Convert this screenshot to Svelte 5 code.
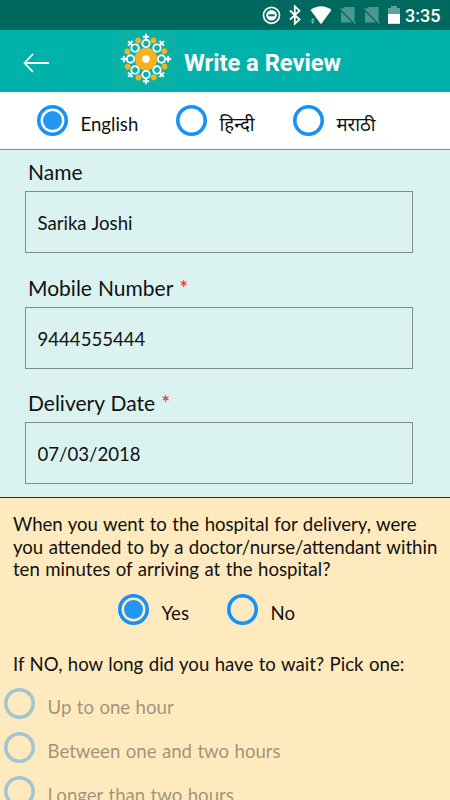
<script>
  let language = $state('en');
  let attended = $state('yes');

  const languages = [
    { id: 'en', label: 'English' },
    { id: 'hi', label: 'हिन्दी' },
    { id: 'mr', label: 'मराठी' }
  ];

  const fields = [
    { label: 'Name', value: 'Sarika Joshi', required: false },
    { label: 'Mobile Number', value: '9444555444', required: true },
    { label: 'Delivery Date', value: '07/03/2018', required: true }
  ];

  const waits = ['Up to one hour', 'Between one and two hours', 'Longer than two hours'];
  const petals = [0, 45, 90, 135, 180, 225, 270, 315];
</script>

{#snippet radio(checked)}
  <span class="radio">
    {#if checked}<span class="dot"></span>{/if}
  </span>
{/snippet}

<div class="screen">
  <div class="status">
    <svg width="140" height="30" viewBox="260 0 140 30">
      <circle cx="271.5" cy="15.3" r="8" fill="none" stroke="#fff" stroke-width="1.7" />
      <circle cx="271.5" cy="15.3" r="5.3" fill="#fff" />
      <path d="M268.3 15.3h6.4" stroke="#00695f" stroke-width="2" />
      <path d="M290 10.5l9.5 9-4.7 4.3V6.400l4.700 4.300-9.500 9" fill="none" stroke="#fff" stroke-width="1.8" />
      <path d="M310.5 10q10.500-7.500 21 0L321 24.300z" fill="#fff" />
      <path d="M311 20.500l1.700-2.300 1.700 2.300zM311 21.500h3.400l-1.700 2.300z" fill="#a5cfca" />
      <g fill="#4a9890">
        <path d="M345 7h9.500v15.500L341.500 9.500zM341 11.500l11 11h-11z" />
        <path d="M369 7h9.500v15.500L365.500 9.500zM365 11.500l11 11h-11z" />
      </g>
      <path d="M340.500 8l15 15.500M364.500 8l15 15.500" stroke="#4a9890" stroke-width="1.3" />
      <path d="M388 8h3V6h6v2h3v6h-12z" fill="#5da39c" />
      <path d="M388 14h12v9.800h-12z" fill="#fff" />
    </svg>
    <span class="time">3:35</span>
  </div>

  <header>
    <svg class="back" width="26" height="20" viewBox="0 0 26 20">
      <path d="M26 10H2M10 1L1.500 10l8.500 9" fill="none" stroke="#fff" stroke-width="1.8" />
    </svg>
    <svg class="logo" width="62" height="56" viewBox="-31 -28 62 56">
      <rect x="-31" y="-28" width="62" height="56" fill="#0bb1a6" />
      <circle r="11.3" fill="#f9b122" />
      <circle r="3.7" fill="#fff" />
      {#each petals as angle}
        <g transform="rotate({angle})">
          <circle cy="-15.5" r="5" fill="#0bb1a6" />
          <circle cy="-15.5" r="3.700" fill="none" stroke="#fff" stroke-width="1.9" />
          <path d="M0-19v-6.200M-3.200-22.200h6.400" stroke="#fff" stroke-width="1.9" />
          <circle cx="7.500" cy="-18.500" r="2.900" fill="#f9b122" />
        </g>
      {/each}
    </svg>
    <h1>Write a Review</h1>
  </header>

  <div class="languages">
    {#each languages as lang}
      <button class="choice {lang.id}" onclick={() => (language = lang.id)}>
        {@render radio(language === lang.id)}
        <span class="text">{lang.label}</span>
      </button>
    {/each}
  </div>

  <section class="details">
    {#each fields as field}
      <label class="field">
        <span class="label">{field.label}{#if field.required}<span class="star">*</span>{/if}</span>
        <input type="text" bind:value={field.value} />
      </label>
    {/each}
  </section>

  <section class="questions">
    <p class="question">
      When you went to the hospital for delivery, were<br />
      you attended to by a doctor/nurse/attendant within<br />
      ten minutes of arriving at the hospital?
    </p>
    <div class="answers">
      <button class="choice yes" onclick={() => (attended = 'yes')}>
        {@render radio(attended === 'yes')}
        <span class="text">Yes</span>
      </button>
      <button class="choice" onclick={() => (attended = 'no')}>
        {@render radio(attended === 'no')}
        <span class="text">No</span>
      </button>
    </div>
    <p class="question follow">If NO, how long did you have to wait? Pick one:</p>
    <div class="waits">
      {#each waits as wait}
        <button class="choice" disabled>
          {@render radio(false)}
          <span class="text">{wait}</span>
        </button>
      {/each}
    </div>
  </section>
</div>

<style>
  :global(body) {
    margin: 0;
    overflow: hidden;
  }

  .screen {
    width: 450px;
    height: 800px;
    overflow: hidden;
    display: flex;
    flex-direction: column;
    font-family: Lato, 'Noto Sans', sans-serif;
    color: #111;
  }

  .status {
    height: 30px;
    flex-shrink: 0;
    display: flex;
    justify-content: flex-end;
    padding-right: 10px;
    gap: 5px;
    background: #00695f;
  }

  .time {
    width: 35px;
    font: 500 18px/31px Roboto, sans-serif;
    color: #fff;
    white-space: nowrap;
  }

  header {
    height: 62px;
    flex-shrink: 0;
    display: flex;
    align-items: center;
    background: #00b2a9;
  }

  .back {
    margin: 3px 0 0 23px;
  }

  .logo {
    margin: -4px 0 0 66px;
  }

  h1 {
    margin: 4px 0 0 7px;
    font: 700 23.7px/30px Roboto, sans-serif;
    color: #fff;
    white-space: nowrap;
  }

  .choice {
    display: flex;
    align-items: flex-start;
    height: 31px;
    padding: 0;
    border: 0;
    background: none;
    font: inherit;
    font-size: 18.6px;
    word-spacing: 0.7px;
    color: inherit;
    white-space: nowrap;
  }

  .radio {
    width: 31px;
    height: 31px;
    flex-shrink: 0;
    border-radius: 50%;
    box-shadow: inset 0 0 0 3.6px #1592f5;
  }

  .dot {
    display: block;
    width: 19px;
    height: 19px;
    margin: 6px;
    border-radius: 50%;
    background: #2196f3;
  }

  .text {
    margin-left: 12.5px;
    line-height: 24px;
    padding-top: 7px;
  }

  .languages {
    height: 57px;
    flex-shrink: 0;
    box-sizing: border-box;
    display: flex;
    padding: 13px 0 0 37px;
    background: #fff;
  }

  .en {
    width: 139px;
  }

  .hi {
    width: 117px;
  }

  .details {
    height: 348px;
    flex-shrink: 0;
    box-sizing: border-box;
    padding: 7px 37px 0 25px;
    border-top: 1px solid #7e8f8d;
    background: #dbf3f0;
  }

  .field {
    display: block;
    height: 115.5px;
  }

  .label {
    display: block;
    height: 34px;
    padding-left: 3px;
    font-size: 21px;
    line-height: 29px;
    word-spacing: 0.7px;
  }

  .star {
    margin-left: 6px;
    color: #f22;
  }

  input {
    width: 388px;
    height: 62px;
    box-sizing: border-box;
    display: block;
    padding: 2px 11.5px 0;
    border: 1px solid #7e8f8d;
    border-radius: 0;
    outline: 0;
    background: transparent;
    font: inherit;
    font-size: 18.6px;
    word-spacing: 0.7px;
    color: #111;
  }

  .questions {
    flex: 1;
    min-height: 0;
    padding: 15px 0 0 13px;
    border-top: 1px solid #25302f;
    background: #ffeabf;
  }

  .question {
    margin: 0;
    font-size: 18.6px;
    line-height: 22.5px;
    word-spacing: 0.7px;
    white-space: nowrap;
  }

  .answers {
    display: flex;
    padding: 13px 0 0 105px;
  }

  .yes {
    width: 109px;
  }

  .follow {
    margin-top: 28px;
  }

  .waits {
    display: flex;
    flex-direction: column;
    gap: 13px;
    margin: 13px 0 0 -9px;
  }

  .waits .choice {
    opacity: 0.4;
  }
</style>
